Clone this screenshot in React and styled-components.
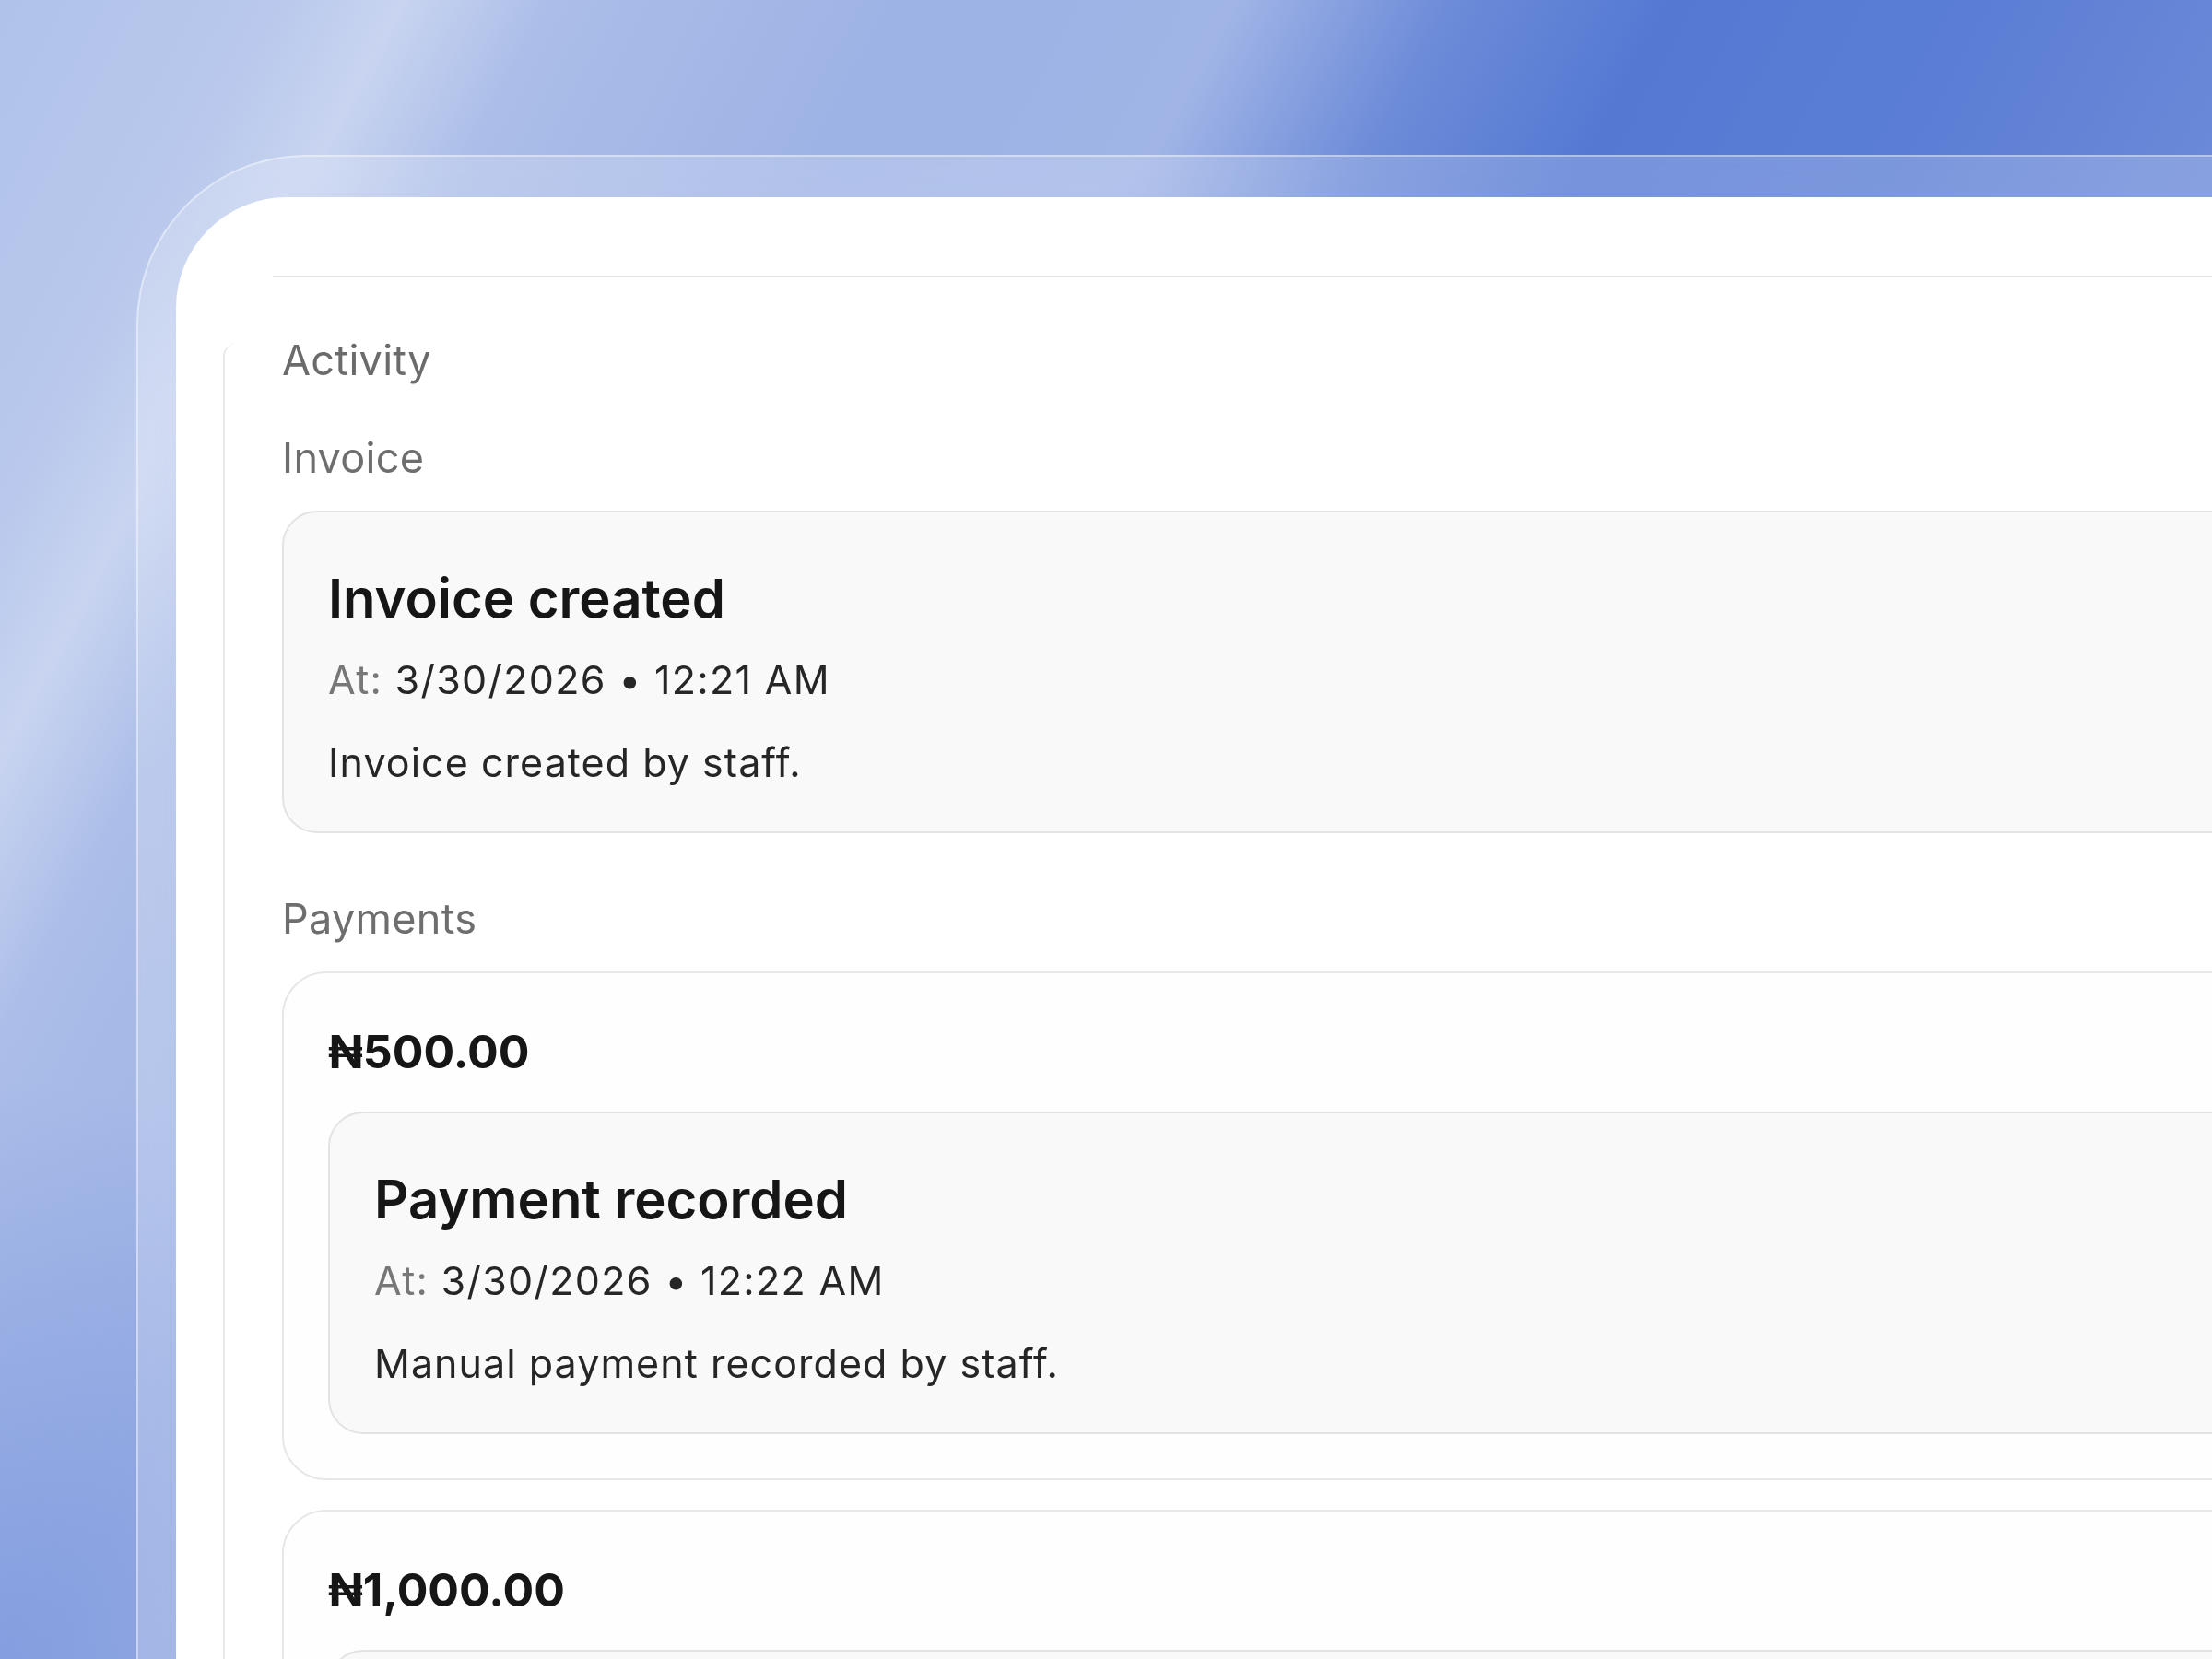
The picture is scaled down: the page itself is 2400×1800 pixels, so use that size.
import styled, { createGlobalStyle } from "styled-components";

const GlobalStyle = createGlobalStyle`
  html, body {
    margin: 0;
    padding: 0;
  }
  body {
    font-family: Inter, "Noto Sans", "Liberation Sans", sans-serif;
    -webkit-font-smoothing: antialiased;
  }
`;

const invoiceEvents = [
  {
    title: "Invoice created",
    at: "3/30/2026 • 12:21 AM",
    note: "Invoice created by staff.",
  },
];

const payments = [
  {
    amount: "₦500.00",
    events: [
      {
        title: "Payment recorded",
        at: "3/30/2026 • 12:22 AM",
        note: "Manual payment recorded by staff.",
      },
    ],
  },
  {
    amount: "₦1,000.00",
    events: [
      {
        title: "Payment recorded",
        at: "3/30/2026 • 12:24 AM",
        note: "Manual payment recorded by staff.",
      },
    ],
  },
];

const EventCard = ({ event }) => (
  <Event>
    <EventTitle>{event.title}</EventTitle>
    <EventMeta>
      <span>At: </span>
      {event.at}
    </EventMeta>
    <EventNote>{event.note}</EventNote>
  </Event>
);

const App = () => {
  return (
    <>
      <GlobalStyle />
      <Page>
        <Glass>
          <Sheet>
            <SheetHeader />
            <Activity>
              <Heading>Activity</Heading>
              <Sections>
                <Section>
                  <Label>Invoice</Label>
                  {invoiceEvents.map((ev) => (
                    <EventCard event={ev} key={ev.title} />
                  ))}
                </Section>
                <Section>
                  <Label>Payments</Label>
                  <PaymentList>
                    {payments.map((p) => (
                      <Payment key={p.amount}>
                        <Amount>{p.amount}</Amount>
                        {p.events.map((ev) => (
                          <EventCard event={ev} key={ev.at} />
                        ))}
                      </Payment>
                    ))}
                  </PaymentList>
                </Section>
              </Sections>
            </Activity>
          </Sheet>
        </Glass>
      </Page>
    </>
  );
};

export default App;

const Page = styled.div`
  width: 2400px;
  height: 1800px;
  overflow: hidden;
  box-sizing: border-box;
  padding: 168px 0 0 148px;
  display: flex;
  align-items: flex-start;
  background:
    radial-gradient(ellipse 700px 900px at 0% 100%, rgba(110, 140, 218, 0.55), transparent 70%),
    linear-gradient(
      118deg,
      #b0c2ea 0%,
      #b9c8ec 9%,
      #c8d4f0 13%,
      #abbde8 18%,
      #9db2e5 30%,
      #a0b4e6 40%,
      #6c8bd8 47%,
      #5579d3 54%,
      #5b7dd4 64%,
      #7390da 80%,
      #86a0df 100%
    );
`;

const Glass = styled.div`
  flex: 0 0 2500px;
  min-height: 1700px;
  box-sizing: border-box;
  padding: 44px 0 0 41px;
  border-top: 2px solid rgba(255, 255, 255, 0.4);
  border-left: 2px solid rgba(255, 255, 255, 0.4);
  border-top-left-radius: 184px;
  background: rgba(255, 255, 255, 0.2);
  backdrop-filter: blur(30px);
`;

const Sheet = styled.div`
  background: #ffffff;
  border-top-left-radius: 120px;
  min-height: 1700px;
  overflow: hidden;
`;

const SheetHeader = styled.div`
  height: 85px;
  margin-left: 105px;
  border-bottom: 2px solid #e4e4e4;
`;

const Activity = styled.div`
  margin: 72px 0 0 51px;
  padding-left: 62px;
  border-left: 2px solid #e9e9e9;
  border-top-left-radius: 14px;
`;

const Heading = styled.div`
  font-size: 45px;
  line-height: 36px;
  color: #6b6b6b;
  letter-spacing: 0.3px;
`;

const Sections = styled.div`
  margin-top: 58px;
  display: flex;
  flex-direction: column;
  gap: 63px;
`;

const Section = styled.section`
  display: flex;
  flex-direction: column;
  gap: 27px;
`;

const Label = styled.div`
  font-size: 45px;
  line-height: 60px;
  color: #6e6e6e;
  letter-spacing: 0.3px;
`;

const PaymentList = styled.div`
  display: flex;
  flex-direction: column;
  gap: 32px;
`;

const Payment = styled.div`
  border: 2px solid #e7e7e7;
  border-radius: 48px;
  background: #fefefe;
  padding: 51px 48px 48px;
  display: flex;
  flex-direction: column;
  gap: 31px;
`;

const Amount = styled.div`
  font-size: 50px;
  line-height: 68px;
  font-weight: 700;
  color: #161616;
`;

const Event = styled.div`
  border: 2px solid #e3e3e3;
  border-radius: 38px;
  background: #f9f9f9;
  padding: 57px 48px 45px 48px;
  display: flex;
  flex-direction: column;
`;

const EventTitle = styled.div`
  font-size: 58px;
  line-height: 72px;
  font-weight: 600;
  color: #161616;
`;

const EventMeta = styled.div`
  margin-top: 22px;
  font-size: 43px;
  line-height: 60px;
  color: #262626;
  letter-spacing: 1.3px;

  span {
    color: #777777;
  }
`;

const EventNote = styled.div`
  margin-top: 30px;
  font-size: 43px;
  line-height: 60px;
  color: #262626;
  letter-spacing: 1.05px;
`;
